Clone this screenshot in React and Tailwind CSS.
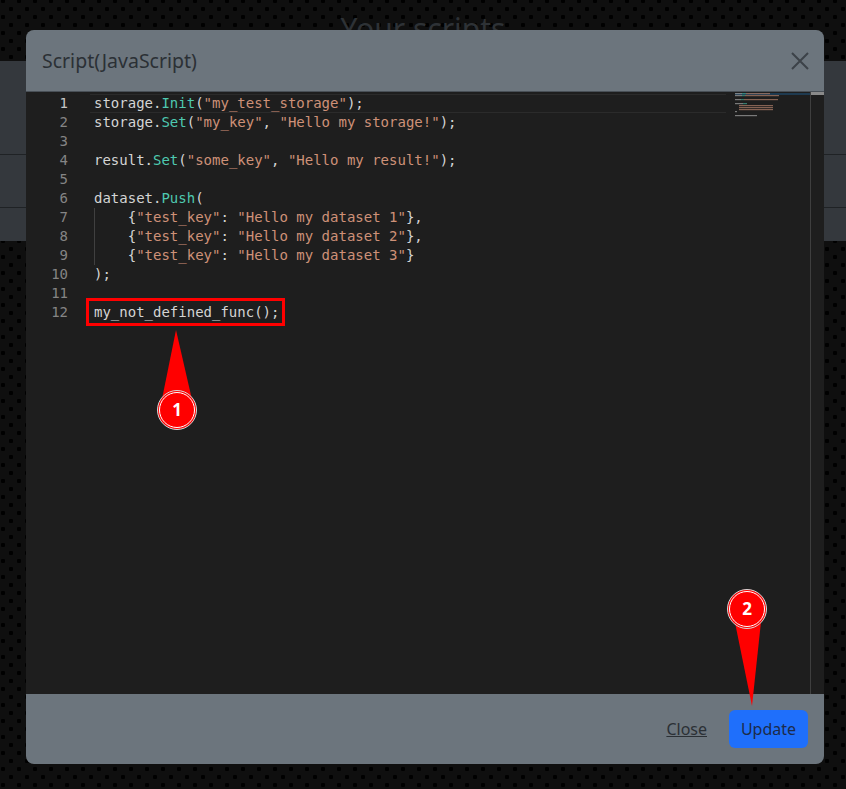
const code = [
  [['storage.', 't'], ['Init', 'f'], ['(', 't'], ['"my_test_storage"', 's'], [');', 't']],
  [['storage.', 't'], ['Set', 'f'], ['(', 't'], ['"my_key"', 's'], [', ', 't'], ['"Hello my storage!"', 's'], [');', 't']],
  [],
  [['result.', 't'], ['Set', 'f'], ['(', 't'], ['"some_key"', 's'], [', ', 't'], ['"Hello my result!"', 's'], [');', 't']],
  [],
  [['dataset.', 't'], ['Push', 'f'], ['(', 't']],
  [['    {', 't'], ['"test_key"', 's'], [': ', 't'], ['"Hello my dataset 1"', 's'], ['},', 't']],
  [['    {', 't'], ['"test_key"', 's'], [': ', 't'], ['"Hello my dataset 2"', 's'], ['},', 't']],
  [['    {', 't'], ['"test_key"', 's'], [': ', 't'], ['"Hello my dataset 3"', 's'], ['}', 't']],
  [[');', 't']],
  [],
  [['my_not_defined_func();', 't']],
]

const tokenClass = {
  t: 'text-[#d4d4d4]',
  f: 'text-[#4ec9b0]',
  s: 'text-[#ce9178]',
}

function Minimap() {
  const rows = [
    [[0, 7, '#9a9a9a'], [7, 4, '#3f9c8a'], [11, 24, '#a87a66']],
    [[0, 7, '#9a9a9a'], [7, 3, '#3f9c8a'], [10, 34, '#a87a66']],
    null,
    [[0, 6, '#9a9a9a'], [6, 3, '#3f9c8a'], [9, 34, '#a87a66']],
    null,
    [[0, 8, '#9a9a9a'], [8, 4, '#3f9c8a']],
    [[4, 34, '#a87a66']],
    [[4, 34, '#a87a66']],
    [[4, 34, '#a87a66']],
    [[0, 2, '#9a9a9a']],
    null,
    [[0, 22, '#9a9a9a']],
  ]
  return (
    <svg className="absolute left-[709px] top-0" width="76" height="30" viewBox="0 0 76 30">
      <rect x="0" y="1" width="75" height="2" fill="#1e3a50" />
      {rows.map((row, i) =>
        row ? row.map(([x, w, c], j) => (
          <rect key={i + '-' + j} x={x} y={1 + i * 2} width={w} height="1.2" fill={c} opacity="0.75" />
        )) : null
      )}
    </svg>
  )
}

function Callout({ n, cx, cy, tipX, tipY }) {
  return (
    <g>
      <polygon points={`${tipX},${tipY} ${cx - 16},${cy - 6} ${cx + 16},${cy - 6}`} fill="#ff0000" />
      <circle cx={cx} cy={cy} r="19.5" fill="#ff0000" stroke="#d8d8d8" strokeWidth="1" />
      <circle cx={cx} cy={cy} r="17.5" fill="#ff0000" stroke="#ffffff" strokeWidth="1" />
      <text x={cx} y={cy + 6} textAnchor="middle" fill="#ffffff" fontSize="17" fontWeight="700" fontFamily="'Noto Sans', sans-serif">{n}</text>
    </g>
  )
}

export default function App() {
  return (
    <div className="relative h-[789px] w-[846px] overflow-hidden bg-[#0f0f0f] bg-[radial-gradient(circle,#000000_2px,transparent_2.5px),radial-gradient(circle,#000000_2px,transparent_2.5px)] bg-[length:16px_16px] bg-[position:3px_1px,11px_9px] font-['Noto_Sans',sans-serif]">
      {/* page behind the dialog */}
      <h1 className="h-[61px] pt-[12px] text-center text-[30px] leading-[34px] text-[#2e3236]">Your scripts</h1>
      <div className="h-[180px] bg-[#34383d]">
        <div className="h-[94px] border-b border-[#1f2225]" />
        <div className="h-[53px] border-b border-[#1f2225]" />
      </div>

      {/* dialog */}
      <div className="absolute left-[26px] top-[30px] flex h-[734px] w-[798px] flex-col overflow-hidden rounded-[8px] bg-[#1e1e1e]">
        <div className="flex h-[62px] shrink-0 items-center justify-between border-b border-[#495057] bg-[#6c757d] pl-[16px] pr-[15px]">
          <span className="text-[19.5px] leading-none text-[#2b3035]">Script(JavaScript)</span>
          <svg width="18" height="18" viewBox="0 0 18 18" fill="none" stroke="#3c4248" strokeWidth="2">
            <path d="M1 1l16 16M17 1L1 17" />
          </svg>
        </div>

        <div className="relative flex-1 overflow-hidden pt-[2px] font-['DejaVu_Sans_Mono',monospace] text-[14px] leading-[19px]">
          <div className="absolute left-[64px] right-[98px] top-[2px] h-[19px] border-y border-[#2b2b2b]" />
          <div className="absolute left-[68px] top-[116px] h-[57px] w-px bg-[#404040]" />
          <div className="relative">
            {code.map((tokens, i) => (
              <div key={i} className="flex h-[19px]">
                <span className={`w-[42px] shrink-0 text-right ${i === 0 ? 'text-[#c6c6c6]' : 'text-[#858585]'}`}>{i + 1}</span>
                <span className="ml-[26px] whitespace-pre">
                  {tokens.map(([text, kind], j) => (
                    <span key={j} className={tokenClass[kind]}>{text}</span>
                  ))}
                </span>
              </div>
            ))}
          </div>
          <Minimap />
          <div className="absolute bottom-0 left-[784px] top-0 w-px bg-[#3f3f3f]" />
          <div className="absolute left-[785px] right-0 top-0 h-[3px] bg-[#8a8a8a]" />
        </div>

        <div className="flex h-[70px] shrink-0 items-center justify-end gap-[22px] bg-[#6c757d] pr-[16px]">
          <a className="text-[16px] text-[#2b3035] underline">Close</a>
          <button type="button" className="h-[38px] w-[79px] rounded-[6px] bg-[#1f6ffb] text-[16px] text-[#1c2b4a]">Update</button>
        </div>
      </div>

      {/* annotations */}
      <div className="absolute left-[86px] top-[298px] h-[28px] w-[199px] border-[3px] border-[#ff0000]" />
      <svg className="pointer-events-none absolute left-0 top-0" width="846" height="789" viewBox="0 0 846 789">
        <Callout n="1" cx={177} cy={410} tipX={176} tipY={330} />
        <Callout n="2" cx={747} cy={609} tipX={752} tipY={706} />
      </svg>
    </div>
  )
}
